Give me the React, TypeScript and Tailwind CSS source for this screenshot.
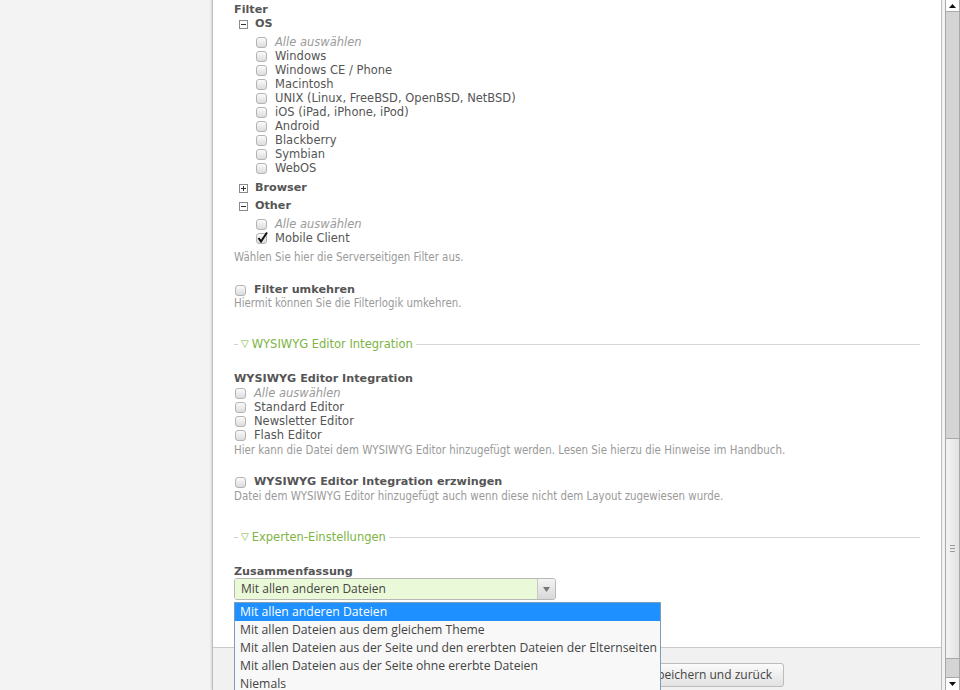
import React from 'react';

const osItems = [
    "Windows",
    "Windows CE / Phone",
    "Macintosh",
    "UNIX (Linux, FreeBSD, OpenBSD, NetBSD)",
    "iOS (iPad, iPhone, iPod)",
    "Android",
    "Blackberry",
    "Symbian",
    "WebOS",
];

const options = [
    "Mit allen anderen Dateien",
    "Mit allen Dateien aus dem gleichem Theme",
    "Mit allen Dateien aus der Seite und den ererbten Dateien der Elternseiten",
    "Mit allen Dateien aus der Seite ohne ererbte Dateien",
    "Niemals",
];

const Box = ({ checked = false }: { checked?: boolean }) => (
    <span className="relative inline-block w-[11px] h-[11px] rounded-[3px] border border-[#b4b4b4] bg-gradient-to-b from-[#fbfbfb] to-[#dcdcdc] shrink-0">
        {checked && (
            <svg className="absolute -left-[1px] -top-[3px]" width="13" height="13" viewBox="0 0 13 13">
                <path d="M2.5 7 L5 10.5 L11 1.5" fill="none" stroke="#111" strokeWidth="2" />
            </svg>
        )}
    </span>
);

const Toggle = ({ open }: { open: boolean }) => (
    <span className="relative inline-block w-[9px] h-[9px] border border-[#8a8a8a] bg-white shrink-0">
        <span className="absolute left-[1px] top-[3px] w-[5px] h-[1px] bg-[#333]"></span>
        {!open && <span className="absolute left-[3px] top-[1px] w-[1px] h-[5px] bg-[#333]"></span>}
    </span>
);

const Item = ({ label, italic = false, checked = false }: { label: string; italic?: boolean; checked?: boolean }) => (
    <div className="flex items-center h-[14px] pl-[22px] gap-[8px]">
        <Box checked={checked} />
        <span className={italic ? "italic text-[#9a9a9a]" : "text-[#555]"}>{label}</span>
    </div>
);

const Legend = ({ title }: { title: string }) => (
    <div className="flex items-center h-[16px]">
        <span className="w-[4px] h-[1px] bg-[#d0d0d0]"></span>
        <span className="text-[#7db443] px-[3px] text-[10px]">▽</span>
        <span className="text-[#7db443] pr-[3px]">{title}</span>
        <span className="flex-1 h-[1px] bg-[#d6d6d6]"></span>
    </div>
);

const help = "text-[#9a9a9a] text-[11.4px] leading-[14px] [font-family:'DejaVu_Sans_Condensed','DejaVu_Sans',sans-serif]";
const bold = "font-bold text-[#555] text-[11.2px]";

export default function App() {
    return (
        <div className="flex h-[690px] w-[960px] overflow-hidden bg-[#f3f3f3] text-[11.5px] [font-family:'DejaVu_Sans',sans-serif]">
            <div className="w-[212px] shrink-0"></div>
            <div className="relative flex flex-col w-[730px] shrink-0 bg-white border-l border-r border-[#bdbdbd] shadow-[-1px_0_2px_rgba(0,0,0,0.12)]">
                <div className="flex-1 pl-[21px] pr-[21px] pt-[3px] leading-[14px]">
                    <div className={`${bold} h-[12px] leading-[13px]`}>Filter</div>
                    <div className={`${bold} flex items-center h-[18px] pl-[5px] gap-[7px]`}>
                        <Toggle open={true} /> OS
                    </div>
                    <div className="mt-[2px]">
                        <Item label="Alle auswählen" italic />
                        {osItems.map((o) => (
                            <Item key={o} label={o} />
                        ))}
                    </div>
                    <div className={`${bold} flex items-center h-[18px] mt-[4px] pl-[5px] gap-[7px]`}>
                        <Toggle open={false} /> Browser
                    </div>
                    <div className={`${bold} flex items-center h-[18px] pl-[5px] gap-[7px]`}>
                        <Toggle open={true} /> Other
                    </div>
                    <div className="mt-[2px]">
                        <Item label="Alle auswählen" italic />
                        <Item label="Mobile Client" checked />
                    </div>
                    <div className={`${help} mt-[5px]`}>Wählen Sie hier die Serverseitigen Filter aus.</div>

                    <div className={`${bold} flex items-center h-[14px] mt-[19px] pl-[1px] gap-[8px]`}>
                        <Box /> Filter umkehren
                    </div>
                    <div className={`${help} -mt-[1px]`}>Hiermit können Sie die Filterlogik umkehren.</div>

                    <div className="mt-[26px]">
                        <Legend title="WYSIWYG Editor Integration" />
                    </div>

                    <div className={`${bold} mt-[20px] h-[14px]`}>WYSIWYG Editor Integration</div>
                    <div className="[&>div]:pl-[1px]">
                        <Item label="Alle auswählen" italic />
                        <Item label="Standard Editor" />
                        <Item label="Newsletter Editor" />
                        <Item label="Flash Editor" />
                    </div>
                    <div className={`${help} mt-[1px]`}>Hier kann die Datei dem WYSIWYG Editor hinzugefügt werden. Lesen Sie hierzu die Hinweise im Handbuch.</div>

                    <div className={`${bold} flex items-center h-[14px] mt-[18px] pl-[1px] gap-[8px]`}>
                        <Box /> WYSIWYG Editor Integration erzwingen
                    </div>
                    <div className={`${help}`}>Datei dem WYSIWYG Editor hinzugefügt auch wenn diese nicht dem Layout zugewiesen wurde.</div>

                    <div className="mt-[26px]">
                        <Legend title="Experten-Einstellungen" />
                    </div>

                    <div className={`${bold} mt-[20px] h-[13px]`}>Zusammenfassung</div>
                    <div className="flex h-[22px] w-[322px] rounded-[3px] border border-[#b8b8b8] overflow-hidden [font-family:'Open_Sans','DejaVu_Sans',sans-serif] text-[12px]">
                        <div className="flex-1 bg-[#eafad8] pl-[6px] flex items-center text-[#444]">Mit allen anderen Dateien</div>
                        <div className="w-[18px] border-l border-[#c8c8c8] bg-gradient-to-b from-[#f4f4f4] to-[#d8d8d8] flex items-center justify-center">
                            <svg width="7" height="5" viewBox="0 0 7 5"><path d="M0 0 H7 L3.5 5 Z" fill="#777" /></svg>
                        </div>
                    </div>
                </div>

                <div className="h-[43px] shrink-0 border-t border-[#c9c9c9] bg-[#f1f1f1] flex justify-end items-start pr-[157px] pt-[15px]">
                    <button className="h-[24px] px-[11px] rounded-[3px] border border-[#bcbcbc] bg-gradient-to-b from-[#fbfbfb] to-[#e2e2e2] text-[#444] text-[12px] [font-family:'Open_Sans','DejaVu_Sans',sans-serif]">
                        Speichern und zurück
                    </button>
                </div>

                <div className="absolute left-[21px] top-[602px] w-[427px] border border-[#7f9db9] bg-[#f8f8f8] [font-family:'Open_Sans','DejaVu_Sans',sans-serif] text-[12.2px] text-[#444]">
                    {options.map((o, i) => (
                        <div key={o} className={`h-[18px] leading-[18px] pl-[5px] whitespace-nowrap ${i === 0 ? "bg-[#1e90ff] text-white" : ""}`}>
                            {o}
                        </div>
                    ))}
                </div>
            </div>
            <div className="w-[3px] shrink-0"></div>
            <div className="flex flex-col w-[15px] shrink-0 border-l border-r border-[#a8a8a8] bg-[#d4d4d4]">
                <div className="h-[12px] bg-white border-b border-[#a8a8a8] flex items-center justify-center">
                    <svg width="7" height="4" viewBox="0 0 7 4"><path d="M0 4 H7 L3.5 0 Z" fill="#111" /></svg>
                </div>
                <div className="h-[426px]"></div>
                <div className="h-[221px] border-t border-b border-[#a8a8a8] bg-gradient-to-r from-[#f4f4f4] to-[#e2e2e2] flex items-center justify-center">
                    <div className="flex flex-col gap-[2px]">
                        <span className="w-[5px] h-[1px] bg-[#999]"></span>
                        <span className="w-[5px] h-[1px] bg-[#999]"></span>
                        <span className="w-[5px] h-[1px] bg-[#999]"></span>
                    </div>
                </div>
                <div className="flex-1"></div>
                <div className="h-[13px] bg-white border-t border-[#a8a8a8] flex items-center justify-center">
                    <svg width="7" height="4" viewBox="0 0 7 4"><path d="M0 0 H7 L3.5 4 Z" fill="#111" /></svg>
                </div>
            </div>
        </div>
    );
}
